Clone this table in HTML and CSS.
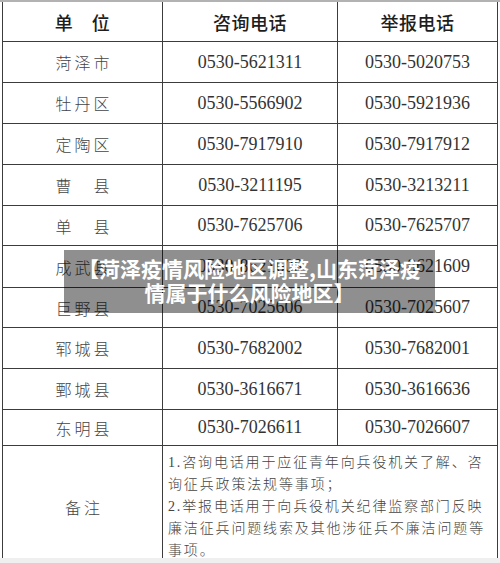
FILE: index.html
```html
<!DOCTYPE html>
<html lang="zh-CN">
<head>
<meta charset="utf-8">
<title>菏泽征兵咨询举报电话</title>
<link rel="stylesheet" href="styles.css">
</head>
<body>
<div class="shot">
  <div class="table" role="table">
    <div class="cell head" role="columnheader">单　位</div>
    <div class="cell head" role="columnheader">咨询电话</div>
    <div class="cell head" role="columnheader">举报电话</div>

    <div class="cell name">菏泽市</div>
    <div class="cell num">0530-5621311</div>
    <div class="cell num">0530-5020753</div>

    <div class="cell name">牡丹区</div>
    <div class="cell num">0530-5566902</div>
    <div class="cell num">0530-5921936</div>

    <div class="cell name">定陶区</div>
    <div class="cell num">0530-7917910</div>
    <div class="cell num">0530-7917912</div>

    <div class="cell name">曹　县</div>
    <div class="cell num">0530-3211195</div>
    <div class="cell num">0530-3213211</div>

    <div class="cell name">单　县</div>
    <div class="cell num">0530-7625706</div>
    <div class="cell num">0530-7625707</div>

    <div class="cell name">成武县</div>
    <div class="cell num">0530-8621608</div>
    <div class="cell num">0530-8621609</div>

    <div class="cell name">巨野县</div>
    <div class="cell num">0530-7025606</div>
    <div class="cell num">0530-7025607</div>

    <div class="cell name">郓城县</div>
    <div class="cell num">0530-7682002</div>
    <div class="cell num">0530-7682001</div>

    <div class="cell name">鄄城县</div>
    <div class="cell num">0530-3616671</div>
    <div class="cell num">0530-3616636</div>

    <div class="cell name">东明县</div>
    <div class="cell num">0530-7026611</div>
    <div class="cell num">0530-7026607</div>

    <div class="cell name">备注</div>
    <div class="cell note">1.咨询电话用于应征青年向兵役机关了解、咨<br>询征兵政策法规等事项；<br>2.举报电话用于向兵役机关纪律监察部门反映<br>廉洁征兵问题线索及其他涉征兵不廉洁问题等<br>事项。</div>
  </div>
  <div class="caption">【菏泽疫情风险地区调整,山东菏泽疫<br>情属于什么风险地区】</div>
</div>
</body>
</html>
```

FILE: styles.css
```css
html, body {
  margin: 0;
  padding: 0;
}
body {
  background: #efefef;
  width: 500px;
  height: 563px;
  overflow: hidden;
}
.shot {
  position: relative;
  width: 500px;
  height: 558px;
  overflow: hidden;
  background: #ffffff;
  border-top: 2px solid #b2b2b2;
  box-sizing: border-box;
}
.table {
  display: grid;
  grid-template-columns: 160px 175px 160px;
  grid-template-rows: 40px 41px 41px 41px 41px 40px 42px 40px 41px 41px 36px 122px;
  width: 496px;
  margin-left: 2px;
  border-left: 1px solid #3c3c3c;
  box-sizing: border-box;
}
.cell {
  box-sizing: border-box;
  border-right: 1px solid #3c3c3c;
  border-bottom: 1px solid #3c3c3c;
  display: flex;
  align-items: center;
  justify-content: center;
}
.head {
  font-family: "Noto Sans CJK SC", sans-serif;
  font-size: 18px;
  font-weight: 500;
  color: #1e1e1e;
  letter-spacing: 0.5px;
}
.name {
  font-family: "Noto Sans CJK SC", sans-serif;
  font-weight: 300;
  font-size: 16px;
  letter-spacing: 3px;
  color: #444444;
  padding-left: 3px;
}
.num {
  font-family: "Liberation Serif", "Noto Sans CJK SC", serif;
  font-size: 18px;
  color: #333333;
}
.note {
  grid-column: 2 / span 2;
  justify-content: flex-start;
  padding-left: 5px;
  font-family: "Liberation Serif", "Noto Sans CJK SC", serif;
  font-weight: 300;
  font-size: 14px;
  line-height: 22px;
  letter-spacing: 1.85px;
  color: #444444;
  white-space: nowrap;
}
.caption {
  position: absolute;
  left: 64px;
  top: 248px;
  width: 371px;
  height: 63px;
  box-sizing: border-box;
  padding-top: 6px;
  background: rgba(0, 0, 0, 0.44);
  color: #ffffff;
  font-family: "Noto Sans CJK SC", sans-serif;
  font-weight: 700;
  font-size: 21px;
  line-height: 24px;
  text-align: center;
}
```
